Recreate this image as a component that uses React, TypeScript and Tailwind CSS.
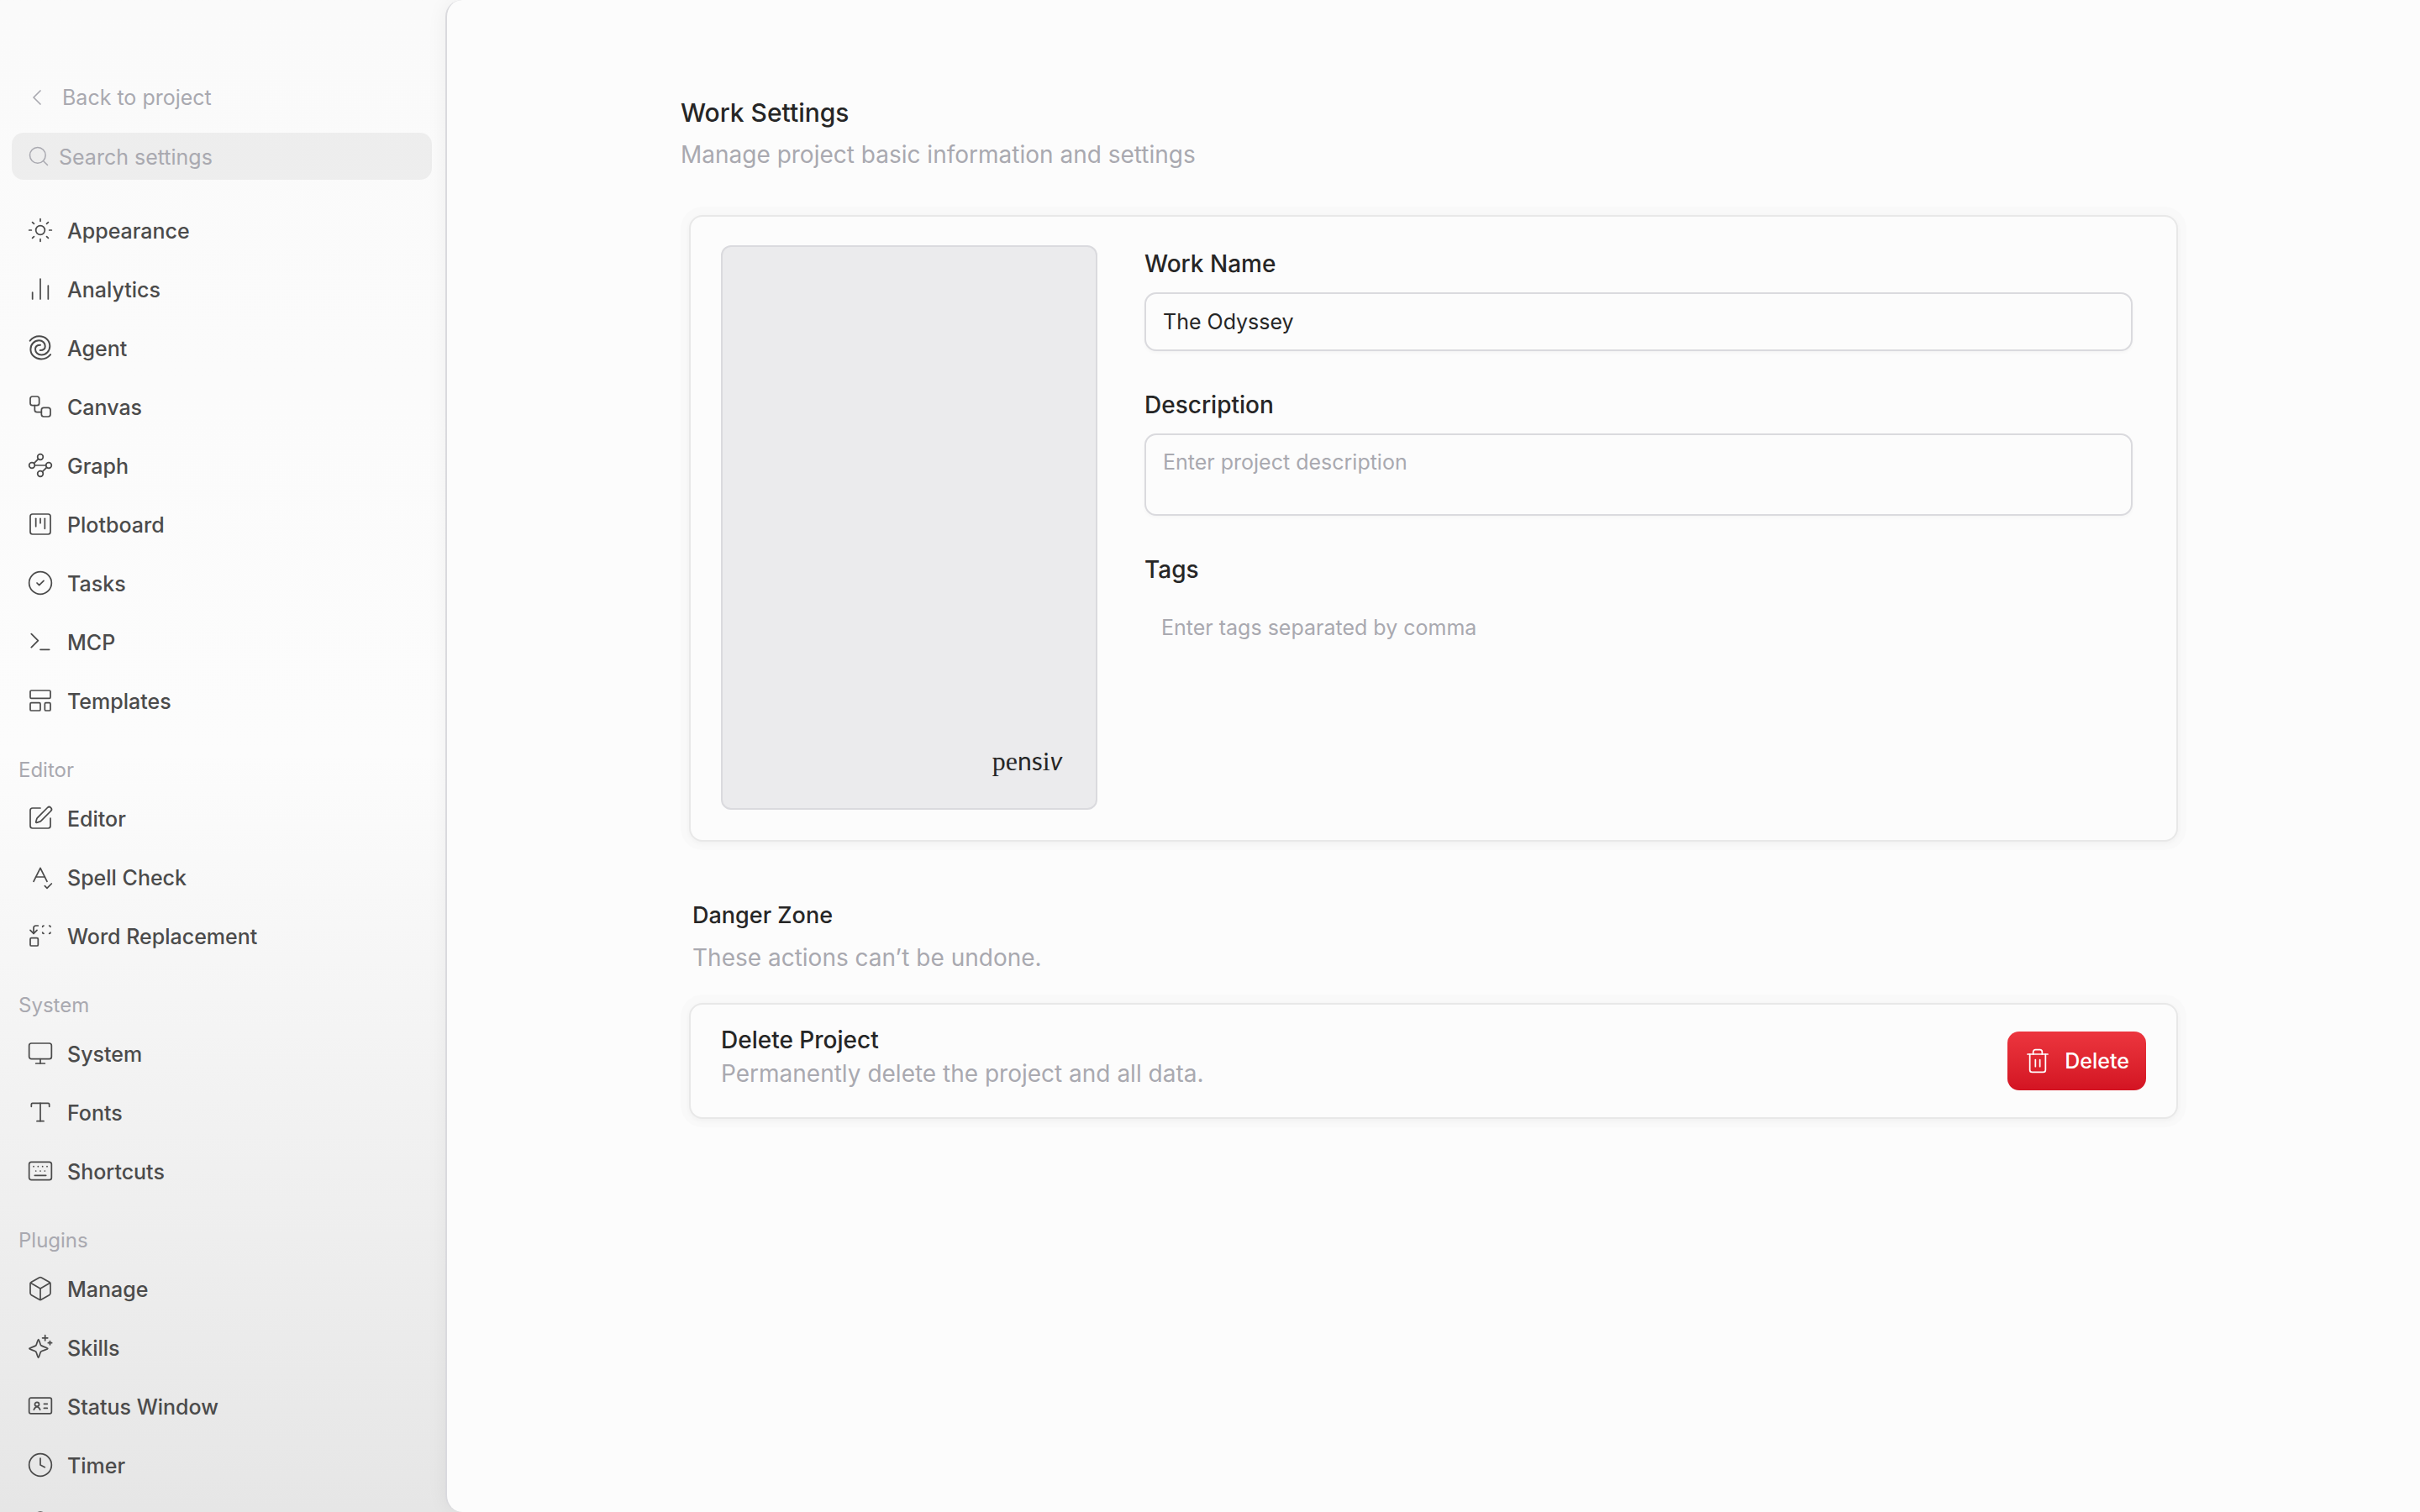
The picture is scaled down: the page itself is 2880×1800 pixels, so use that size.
import type { ReactNode } from "react";
import {
  Box,
  ChartNoAxesColumn,
  ChevronLeft,
  CircleCheck,
  Clock,
  Keyboard,
  LayoutTemplate,
  Monitor,
  Replace,
  Search,
  SpellCheck,
  SquareKanban,
  SquarePen,
  Sun,
  Terminal,
  Trash2,
  Type,
  Waypoints,
  Workflow,
  type LucideIcon,
} from "lucide-react";

const STROKE = 1.3;

function Glyph({ children }: { children: ReactNode }) {
  return (
    <svg
      viewBox="0 0 24 24"
      className="size-8 shrink-0"
      fill="none"
      stroke="currentColor"
      strokeWidth={STROKE}
      strokeLinecap="round"
      strokeLinejoin="round"
      aria-hidden="true"
    >
      {children}
    </svg>
  );
}

function SwirlIcon() {
  const arm =
    "M2.75 5.75C5 3 8 1.75 11 1.75C16.5 1.75 20.5 5.5 20.5 10.5C20.5 15 17 18.4 13 18.4C9.8 18.4 7.5 16.2 7.5 13.2C7.5 11 9.2 9.6 12 9.6";
  return (
    <Glyph>
      <path d={arm} strokeWidth={1.5} />
      <path d={arm} strokeWidth={1.5} transform="rotate(180 11.9 11.9)" />
    </Glyph>
  );
}

function StarsIcon() {
  return (
    <Glyph>
      <path d="M10.25 5C10.9 5 11.6 8.6 12.4 10.1C13.9 11.3 18.6 12.3 18.6 13.1C18.6 13.9 13.9 14.6 12.4 15.9C11.4 17.3 10.9 21.3 10.25 21.3C9.6 21.3 9.1 17.3 8.1 15.9C6.6 14.6 2.2 13.9 2.2 13.1C2.2 12.3 6.6 11.6 8.1 10.3C9.1 8.9 9.6 5 10.25 5Z" />
      <path d="M16.25 1.3v4.6M13.95 3.6h4.6M20.6 6.4v3.2M19 8h3.2" />
    </Glyph>
  );
}

function IdCardIcon() {
  return (
    <Glyph>
      <rect x="2" y="4.6" width="20" height="14" rx="1.6" />
      <circle cx="9" cy="10.4" r="1.9" />
      <path d="M6.2 15.2c.3-1.3 1.2-2.2 2.8-2.9 1.6.7 2.5 1.6 2.8 2.9M15.3 10h2.9M15.3 13.8h2.9" />
    </Glyph>
  );
}

function PartialIcon() {
  return (
    <Glyph>
      <circle cx="12" cy="6" r="4.5" />
    </Glyph>
  );
}

function wrap(Icon: LucideIcon) {
  return function Wrapped() {
    return <Icon className="size-8 shrink-0" strokeWidth={STROKE} aria-hidden="true" />;
  };
}

type Item = { label: string; Icon: () => ReactNode };
type Group = { title?: string; items: Item[] };

const groups: Group[] = [
  {
    items: [
      { label: "Appearance", Icon: wrap(Sun) },
      { label: "Analytics", Icon: wrap(ChartNoAxesColumn) },
      { label: "Agent", Icon: SwirlIcon },
      { label: "Canvas", Icon: wrap(Workflow) },
      { label: "Graph", Icon: wrap(Waypoints) },
      { label: "Plotboard", Icon: wrap(SquareKanban) },
      { label: "Tasks", Icon: wrap(CircleCheck) },
      { label: "MCP", Icon: wrap(Terminal) },
      { label: "Templates", Icon: wrap(LayoutTemplate) },
    ],
  },
  {
    title: "Editor",
    items: [
      { label: "Editor", Icon: wrap(SquarePen) },
      { label: "Spell Check", Icon: wrap(SpellCheck) },
      { label: "Word Replacement", Icon: wrap(Replace) },
    ],
  },
  {
    title: "System",
    items: [
      { label: "System", Icon: wrap(Monitor) },
      { label: "Fonts", Icon: wrap(Type) },
      { label: "Shortcuts", Icon: wrap(Keyboard) },
    ],
  },
  {
    title: "Plugins",
    items: [
      { label: "Manage", Icon: wrap(Box) },
      { label: "Skills", Icon: StarsIcon },
      { label: "Status Window", Icon: IdCardIcon },
      { label: "Timer", Icon: wrap(Clock) },
      { label: "", Icon: PartialIcon },
    ],
  },
];

function Sidebar() {
  return (
    <aside className="flex w-[530px] shrink-0 flex-col overflow-hidden pt-[88px] pr-4 pl-3.5">
      <button
        type="button"
        className="flex h-14 shrink-0 items-center gap-3.5 pl-3.5 text-[25px] leading-10 text-[#a9a9b0]"
      >
        <ChevronLeft className="size-8" strokeWidth={STROKE} aria-hidden="true" />
        Back to project
      </button>
      <label className="mt-3.5 flex h-14 shrink-0 items-center gap-2.5 rounded-[14px] bg-black/5 pl-[18px] text-[#a9a9b0]">
        <Search className="size-7 shrink-0" strokeWidth={STROKE} aria-hidden="true" />
        <input
          type="search"
          aria-label="Search settings"
          placeholder="Search settings"
          className="h-full w-full bg-transparent pt-0.5 text-[25px] outline-none placeholder:text-[#a9a9b0]"
        />
      </label>
      <nav className="mt-[25px] flex flex-col">
        {groups.map((group, g) => (
          <section key={g} className="flex flex-col">
            {group.title && (
              <h3 className="flex h-[70px] items-center pt-[26px] pl-2 text-[24px] text-[#a9a9b0]">{group.title}</h3>
            )}
            {group.items.map(({ label, Icon }, i) => (
              <a
                key={i}
                href="#"
                className="flex h-[70px] items-center gap-4 pl-[18px] text-[25px] leading-10 font-medium text-[#4b4b4b]"
              >
                <Icon />
                <span className="pt-0.5">{label}</span>
              </a>
            ))}
          </section>
        ))}
      </nav>
    </aside>
  );
}

function Card({ children }: { children: ReactNode }) {
  return (
    <div className="rounded-[26px] bg-black/[0.012] p-2.5">
      <div className="rounded-2xl border-2 border-[#e8e8e8] bg-[#fcfcfc] shadow-[0_2px_6px_rgba(0,0,0,0.04)]">
        {children}
      </div>
    </div>
  );
}

function Cover() {
  return (
    <div className="flex aspect-2/3 w-[448px] shrink-0 items-end justify-end rounded-xl border-2 border-[#dadade] bg-[#ebebed] pr-10 pb-9">
      <span className="font-['Liberation_Serif'] text-[32px] leading-10 text-[#262626]">
        pe<span className="font-['Lato'] text-[30px]">ns</span>i<span className="font-['Lato'] text-[30px] italic">v</span>
      </span>
    </div>
  );
}

const labelText = "text-[28px] leading-10 font-medium text-[#262626]";
const mutedText = "text-[28px] leading-10 text-[#a9a9b0]";
const field =
  "block w-full rounded-[14px] border-2 border-[#dadade] bg-[#fcfcfc] px-5 text-[25px] text-[#262626] shadow-[0_2px_4px_rgba(0,0,0,0.03)] outline-none placeholder:text-[#a9a9b0]";

export default function App() {
  return (
    <div className="flex h-screen overflow-hidden bg-linear-to-b from-[#fafafa] via-[#fcfcfc] to-[#e6e6e6] font-['Inter',sans-serif] [font-optical-sizing:none]">
      <Sidebar />
      <main className="flex-1 rounded-l-[20px] border-l-2 border-[#dadade] bg-[#fcfcfc] shadow-[0_0_24px_rgba(0,0,0,0.06)]">
        <div className="mx-auto flex max-w-[1792px] flex-col pt-[114px]">
          <h1 className="text-[30px] leading-10 font-medium text-[#262626]">Work Settings</h1>
          <p className={`mt-2.5 mb-[42px] ${mutedText}`}>Manage project basic information and settings</p>
          <Card>
            <div className="flex gap-14 pt-[34px] pr-[52px] pb-9 pl-9">
              <Cover />
              <form className="flex flex-1 flex-col gap-11 pt-0.5">
                <div className="flex flex-col gap-3.5">
                  <label htmlFor="name" className={labelText}>
                    Work Name
                  </label>
                  <input id="name" type="text" defaultValue="The Odyssey" className={`h-[70px] ${field}`} />
                </div>
                <div className="flex flex-col gap-3.5">
                  <label htmlFor="description" className={labelText}>
                    Description
                  </label>
                  <textarea
                    id="description"
                    placeholder="Enter project description"
                    className={`h-[98px] resize-none py-3 leading-10 ${field}`}
                  />
                </div>
                <div className="flex flex-col gap-3.5">
                  <label htmlFor="tags" className={labelText}>
                    Tags
                  </label>
                  <input
                    id="tags"
                    type="text"
                    placeholder="Enter tags separated by comma"
                    className="h-[70px] w-full bg-transparent px-5 text-[25px] text-[#262626] outline-none placeholder:text-[#a9a9b0]"
                  />
                </div>
              </form>
            </div>
          </Card>
          <div className="mt-[58px] mb-6 pl-3.5">
            <h2 className="text-[27px] leading-10 font-medium text-[#262626]">Danger Zone</h2>
            <p className={`mt-2.5 ${mutedText}`}>These actions can’t be undone.</p>
          </div>
          <Card>
            <div className="flex items-center justify-between px-9 py-[22px]">
              <div className="pb-2.5">
                <h3 className={labelText}>Delete Project</h3>
                <p className={mutedText}>Permanently delete the project and all data.</p>
              </div>
              <button
                type="button"
                className="flex h-[70px] items-center gap-4 rounded-[14px] bg-linear-to-b from-[#ec353e] to-[#d31322] px-5 text-[25px] leading-10 font-medium text-white"
              >
                <Trash2 className="size-8" strokeWidth={STROKE} aria-hidden="true" />
                Delete
              </button>
            </div>
          </Card>
        </div>
      </main>
    </div>
  );
}
